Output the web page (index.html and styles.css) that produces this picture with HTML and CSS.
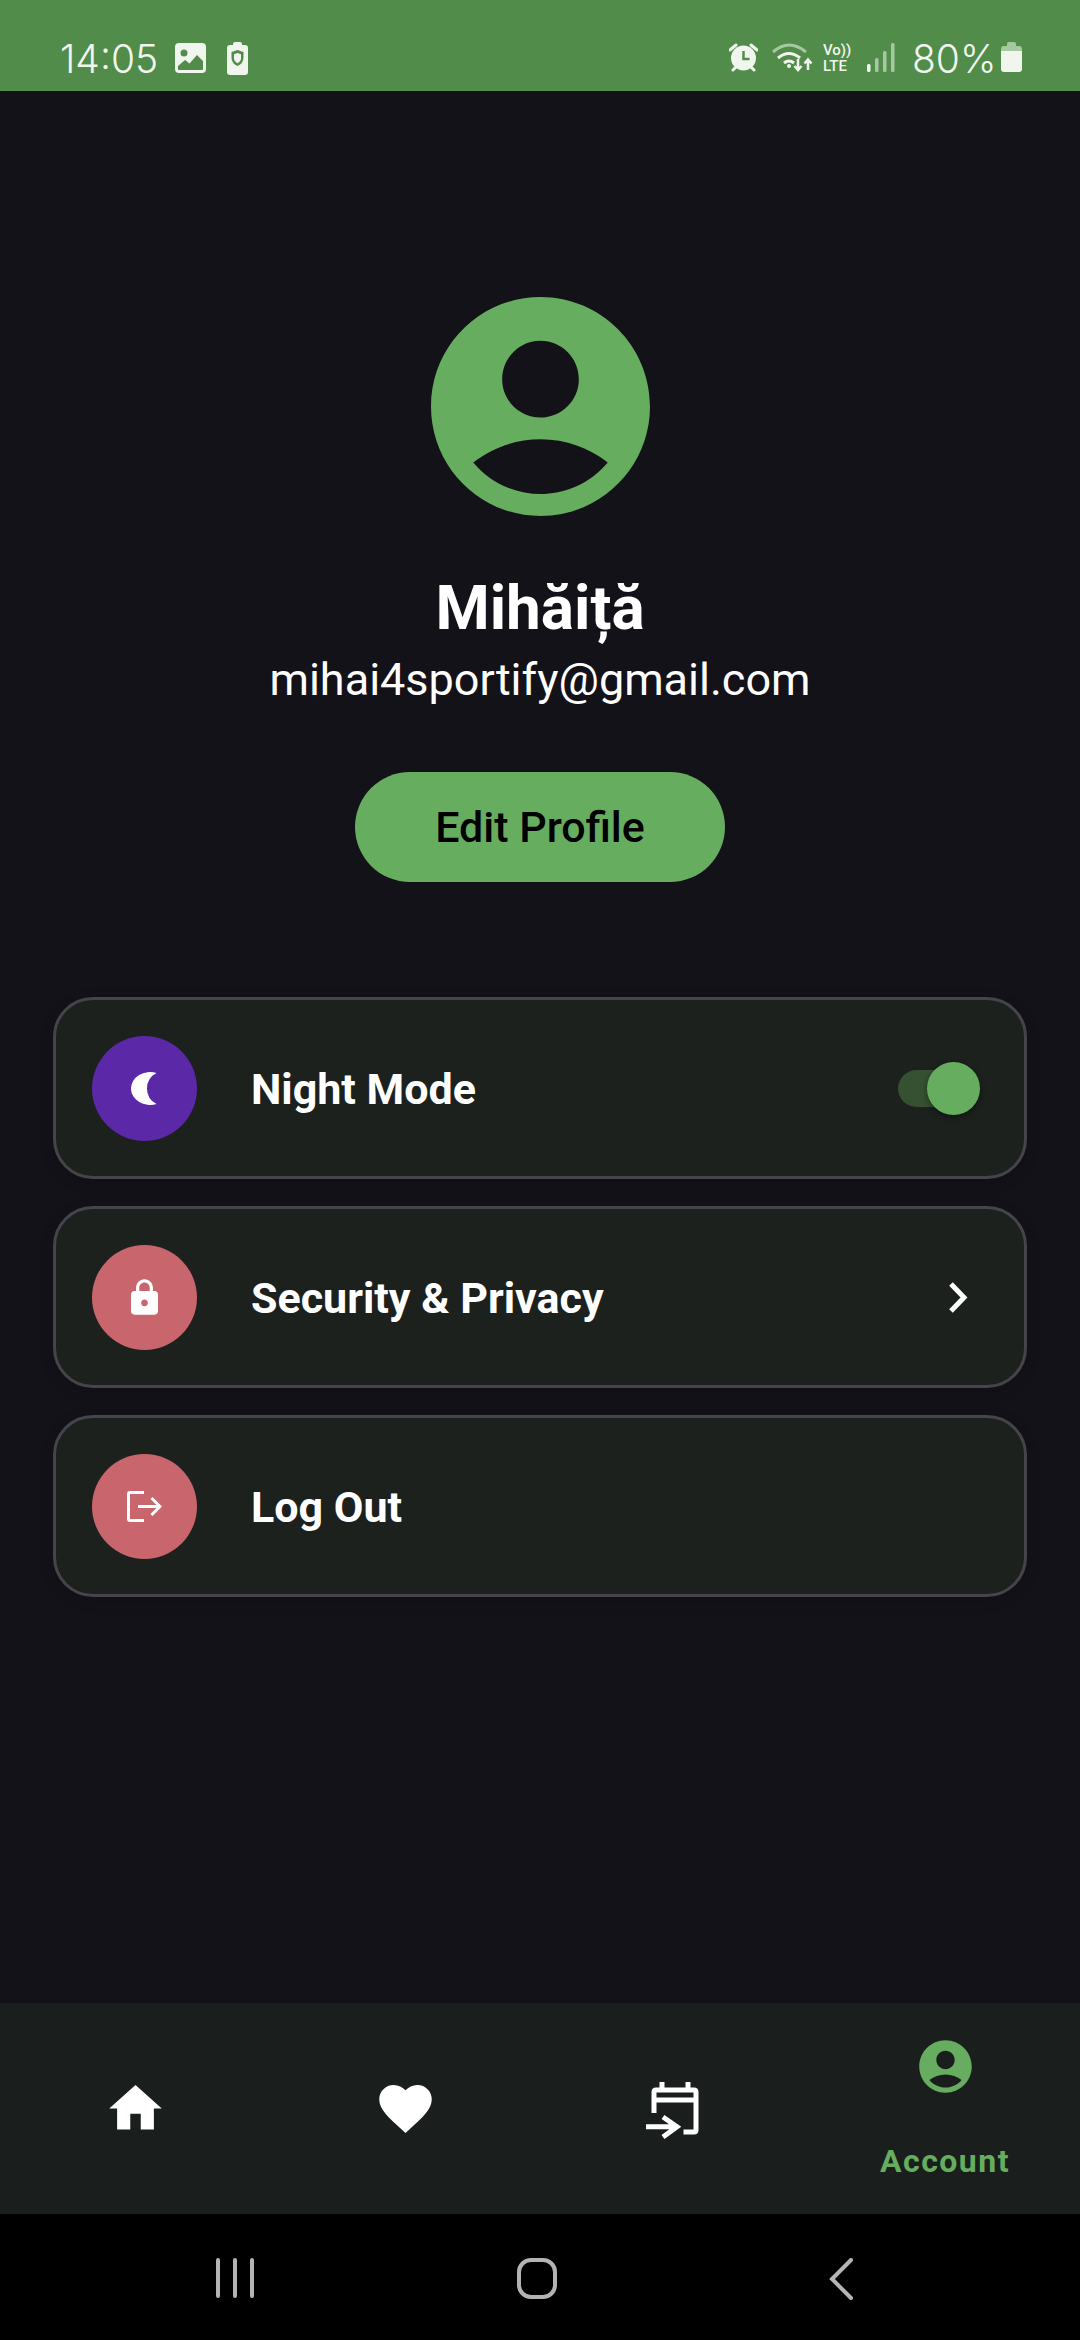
FILE: index.html
```html
<!DOCTYPE html>
<html lang="en">
<head>
  <meta charset="UTF-8" />
  <title>Account</title>
  <link rel="stylesheet" href="styles.css">
</head>
<body>
  <div class="app">

    <div class="status-bar">
      <div class="status-left">
        <span class="status-text time">14:05</span>
        <svg class="st-image" viewBox="0 0 31 30"><rect width="31" height="30" rx="4" fill="#f0f6ee"/><circle cx="9" cy="10" r="3.500" fill="#518c4a"/><path d="M3 26v-3l7-6 4.500 3.500L22 12l6 6v8q0 1-1 1H4q-1 0-1-1z" fill="#518c4a"/></svg>
        <svg class="st-batt" viewBox="0 0 21 33"><path d="M6 3V2q0-2 2-2h5q2 0 2 2v1h3q3 0 3 3v24q0 3-3 3H3q-3 0-3-3V6q0-3 3-3z" fill="#f0f6ee"/><path d="M10.500 8l6 2v6q0 5-6 8-6-3-6-8v-6z" fill="#518c4a"/><path d="M10.500 11l3.500 1.200v4q0 3-3.500 5-3.500-2-3.500-5v-4z" fill="#f0f6ee"/></svg>
      </div>
      <div class="status-right">
        <svg class="st-alarm" viewBox="0 0 29 29"><path d="M1 7l6-5M28 7l-6-5" stroke="#f0f6ee" stroke-width="3" stroke-linecap="round" fill="none"/><path d="M4 27l3-3M25 27l-3-3" stroke="#f0f6ee" stroke-width="3" stroke-linecap="round"/><circle cx="14.500" cy="15" r="12.500" fill="#f0f6ee"/><path d="M14.500 8v8h6" stroke="#518c4a" stroke-width="2.500" fill="none"/></svg>
        <svg class="st-wifi" viewBox="0 0 41 30"><path d="M1 10q16-14 33 0" stroke="#a6c8a1" stroke-width="3" fill="none"/><path d="M6 16q11-9 22 0" stroke="#f0f6ee" stroke-width="3" fill="none"/><path d="M12 21q5-4 10 0" stroke="#f0f6ee" stroke-width="3" fill="none"/><circle cx="17" cy="24" r="2" fill="#f0f6ee"/><path d="M26 17v11M22.500 24l3.500 4 3.500-4M36 28V18M32.500 21.500l3.500-4 3.500 4" stroke="#f0f6ee" stroke-width="2.500" fill="none"/></svg>
        <div class="volte"><span class="volte-line">Vo))</span><span class="volte-line">LTE</span></div>
        <svg class="st-signal" viewBox="0 0 28 29"><rect x="0" y="21" width="3.500" height="8" rx="1.500" fill="#f0f6ee"/><rect x="8" y="15" width="3.500" height="14" rx="1.500" fill="#a6c8a1"/><rect x="16" y="8" width="3.500" height="21" rx="1.500" fill="#a6c8a1"/><rect x="24" y="0" width="3.500" height="29" rx="1.500" fill="#a6c8a1"/></svg>
        <span class="status-text pct">80%</span>
        <svg class="st-battery" viewBox="0 0 21 30"><path d="M6 4V2q0-2 2-2h5q2 0 2 2v2h3q3 0 3 3v2H0V7q0-3 3-3z" fill="#a6c8a1"/><path d="M0 9h21v18q0 3-3 3H3q-3 0-3-3z" fill="#f0f6ee"/></svg>
      </div>
    </div>

    <div class="main">
      <div class="profile">
        <svg class="avatar" viewBox="2 2 20 20"><path d="M12 2C6.480 2 2 6.480 2 12s4.480 10 10 10 10-4.480 10-10S17.520 2 12 2zm0 4c1.930 0 3.500 1.570 3.500 3.500S13.930 13 12 13s-3.500-1.570-3.500-3.500S10.070 6 12 6zm0 14c-2.030 0-4.430-.82-6.140-2.880C7.550 15.800 9.680 15 12 15s4.450.8 6.140 2.120C16.430 19.180 14.030 20 12 20z" fill="#66ad5f"/></svg>
        <h1 class="name">Mihăiță</h1>
        <p class="email">mihai4sportify@gmail.com</p>
        <button class="edit-btn">Edit Profile</button>
      </div>

      <div class="menu">
        <div class="menu-row">
          <div class="menu-icon purple">
            <svg class="ic-moon" viewBox="0 0 28 33"><path d="M25.500 1A19 16.500 0 1 0 25.500 32A17.400 17.400 0 0 1 25.500 1z" fill="#fff"/></svg>
          </div>
          <span class="menu-label">Night Mode</span>
          <div class="switch"><div class="switch-thumb"></div></div>
        </div>
        <div class="menu-row">
          <div class="menu-icon red">
            <svg class="ic-lock" viewBox="4 1 16 21"><path d="M18 8h-1V6c0-2.760-2.240-5-5-5S7 3.240 7 6v2H6c-1.100 0-2 .9-2 2v10c0 1.100.9 2 2 2h12c1.100 0 2-.9 2-2V10c0-1.100-.9-2-2-2zm-6 9c-1.100 0-2-.9-2-2s.9-2 2-2 2 .9 2 2-.9 2-2 2zm3.100-9H8.900V6c0-1.710 1.390-3.100 3.100-3.100 1.710 0 3.100 1.390 3.100 3.100v2z" fill="#fff"/></svg>
          </div>
          <span class="menu-label">Security &amp; Privacy</span>
          <svg class="chevron" viewBox="0 0 19 31"><path d="M2 2l13 13.500L2 29" stroke="#fff" stroke-width="5" fill="none"/></svg>
        </div>
        <div class="menu-row">
          <div class="menu-icon red">
            <svg class="ic-logout" viewBox="0 0 35 31"><path d="M17 1.500H3q-1.500 0-1.500 1.500v25q0 1.500 1.500 1.500h14" stroke="#fff" stroke-width="3" fill="none"/><path d="M11 15.500h22M24.500 7l8.500 8.500-8.500 8.500" stroke="#fff" stroke-width="3" fill="none"/></svg>
          </div>
          <span class="menu-label">Log Out</span>
        </div>
      </div>
    </div>

    <div class="tabbar">
      <div class="tab">
        <svg class="tab-icon" viewBox="0 0 24 24"><path d="M10 20v-6h4v6h5v-8h3L12 3 2 12h3v8z" fill="#fff"/></svg>
      </div>
      <div class="tab">
        <svg class="tab-icon" viewBox="0 0 24 24"><path d="M12 21.350l-1.450-1.320C5.400 15.360 2 12.280 2 8.500 2 5.420 4.420 3 7.500 3c1.740 0 3.410.81 4.500 2.090C13.090 3.810 14.760 3 16.500 3 19.580 3 22 5.420 22 8.500c0 3.780-3.400 6.860-8.550 11.540L12 21.350z" fill="#fff"/></svg>
      </div>
      <div class="tab">
        <svg class="tab-cal" viewBox="0 0 53 57"><path d="M8 31V10q0-2 2-2h38q2 0 2 2v38q0 2-2 2H37.500M16 0v8M42 0v8M8 18h42" stroke="#fff" stroke-width="5" fill="none"/><path d="M0 44.700h31M17 35l14 9.700L17 55" stroke="#fff" stroke-width="5" fill="none"/></svg>
      </div>
      <div class="tab active">
        <svg class="tab-icon" viewBox="0 0 24 24"><path d="M12 2C6.480 2 2 6.480 2 12s4.480 10 10 10 10-4.480 10-10S17.520 2 12 2zm0 4c1.930 0 3.500 1.570 3.500 3.500S13.930 13 12 13s-3.500-1.570-3.500-3.500S10.070 6 12 6zm0 14c-2.030 0-4.430-.82-6.140-2.880C7.550 15.800 9.680 15 12 15s4.450.8 6.140 2.120C16.430 19.180 14.030 20 12 20z" fill="#66ad5f"/></svg>
        <span class="tab-label">Account</span>
      </div>
    </div>

    <div class="nav-bar">
      <svg class="nav-recent" viewBox="0 0 38 40"><path d="M2 2v36M19 2v36M36 2v36" stroke="#b4b4b4" stroke-width="4" stroke-linecap="round"/></svg>
      <svg class="nav-home" viewBox="0 0 40 41"><rect x="2" y="2" width="36" height="37" rx="12" stroke="#b4b4b4" stroke-width="4" fill="none"/></svg>
      <svg class="nav-back" viewBox="0 0 24 42"><path d="M22 2L3 21l19 19" stroke="#b4b4b4" stroke-width="4" stroke-linecap="round" fill="none"/></svg>
    </div>

  </div>
</body>
</html>
```

FILE: styles.css
```css
* {
  box-sizing: border-box;
}
body {
  margin: 0;
  background: #141219;
  font-family: Roboto, "Liberation Sans", sans-serif;
}
svg {
  display: block;
  flex: none;
}
.app {
  width: 1080px;
  height: 2340px;
  display: flex;
  flex-direction: column;
  overflow: hidden;
}

/* status bar */
.status-bar {
  height: 91px;
  background: #518c4a;
  padding: 42px 58px 0 60px;
  display: flex;
  justify-content: space-between;
  align-items: flex-start;
}
.status-left,
.status-right {
  display: flex;
  align-items: flex-start;
}
.status-text {
  color: #f0f6ee;
  font-family: Inter, Roboto, sans-serif;
  font-size: 39px;
  font-weight: 300;
  line-height: 33px;
  white-space: nowrap;
}
.time {
  width: 115px;
}
.st-image {
  width: 31px;
  height: 30px;
  margin-top: 1px;
}
.st-batt {
  width: 21px;
  height: 33px;
  margin-left: 21px;
}
.st-alarm {
  width: 29px;
  height: 29px;
  margin-top: 1px;
}
.st-wifi {
  width: 41px;
  height: 30px;
  margin-left: 14px;
}
.volte {
  width: 30px;
  margin-left: 10px;
  color: #f0f6ee;
  font-size: 15px;
  font-weight: 500;
  display: flex;
  flex-direction: column;
}
.volte-line {
  display: block;
  height: 16px;
  line-height: 16px;
  overflow: hidden;
}
.st-signal {
  width: 28px;
  height: 29px;
  margin-left: 14px;
  margin-top: 1px;
}
.pct {
  width: 89px;
  margin-left: 17px;
}
.st-battery {
  width: 21px;
  height: 30px;
}

/* profile */
.main {
  flex: 1;
  padding: 206px 53px 0;
}
.profile {
  display: flex;
  flex-direction: column;
  align-items: center;
}
.avatar {
  width: 219px;
  height: 219px;
}
.name {
  margin: 50px 0 0;
  color: #fff;
  font-size: 62px;
  font-weight: 700;
  line-height: 84px;
}
.email {
  margin: 2px 0 0;
  color: #fff;
  font-size: 45px;
  font-weight: 400;
  line-height: 56px;
}
.edit-btn {
  width: 370px;
  height: 110px;
  margin-top: 64px;
  border: none;
  border-radius: 55px;
  background: #66ad5f;
  color: #000;
  font-family: inherit;
  font-size: 43px;
  font-weight: 500;
}

/* menu */
.menu {
  margin-top: 115px;
  display: flex;
  flex-direction: column;
  gap: 27px;
}
.menu-row {
  height: 182px;
  padding: 0 36px;
  border: 3px solid #45444b;
  border-radius: 40px;
  background: #1c211e;
  box-shadow: 0 4px 14px rgba(0, 0, 0, 0.15);
  display: flex;
  align-items: center;
}
.menu-icon {
  width: 105px;
  height: 105px;
  border-radius: 50%;
  display: flex;
  align-items: center;
  justify-content: center;
}
.purple {
  background: #5b28a8;
}
.red {
  background: #c9666d;
}
.ic-moon {
  width: 28px;
  height: 33px;
}
.ic-lock {
  width: 27px;
  height: 36px;
}
.ic-logout {
  width: 35px;
  height: 31px;
}
.menu-label {
  flex: 1;
  margin-left: 54px;
  padding-top: 2px;
  color: #fff;
  font-size: 43px;
  font-weight: 700;
}
.switch {
  position: relative;
  width: 74px;
  height: 37px;
  margin-right: 16px;
  border-radius: 19px;
  background: #365032;
}
.switch-thumb {
  position: absolute;
  right: -8px;
  top: -8px;
  width: 53px;
  height: 53px;
  border-radius: 50%;
  background: #66ad5f;
  box-shadow: 0 2px 6px rgba(0, 0, 0, 0.4);
}
.chevron {
  width: 19px;
  height: 31px;
  margin-right: 20px;
}

/* bottom tabs */
.tabbar {
  height: 211px;
  background: #1a1f1d;
  display: grid;
  grid-template-columns: repeat(4, 1fr);
}
.tab {
  display: flex;
  flex-direction: column;
  align-items: center;
  justify-content: center;
}
.tab.active {
  justify-content: flex-start;
  padding-top: 32px;
}
.tab-icon {
  width: 63px;
  height: 63px;
}
.tab-cal {
  width: 53px;
  height: 57px;
  margin: 4px 6px 0 0;
}
.tab-label {
  margin-top: 44px;
  color: #66ad5f;
  font-size: 32px;
  font-weight: 700;
  letter-spacing: 1.500px;
}

/* android nav */
.nav-bar {
  height: 126px;
  background: #000;
  position: relative;
}
.nav-recent,
.nav-home,
.nav-back {
  position: absolute;
  top: 44px;
}
.nav-recent {
  left: 216px;
  width: 38px;
  height: 40px;
}
.nav-home {
  left: 517px;
  width: 40px;
  height: 41px;
}
.nav-back {
  left: 829px;
  width: 24px;
  height: 42px;
}
```
